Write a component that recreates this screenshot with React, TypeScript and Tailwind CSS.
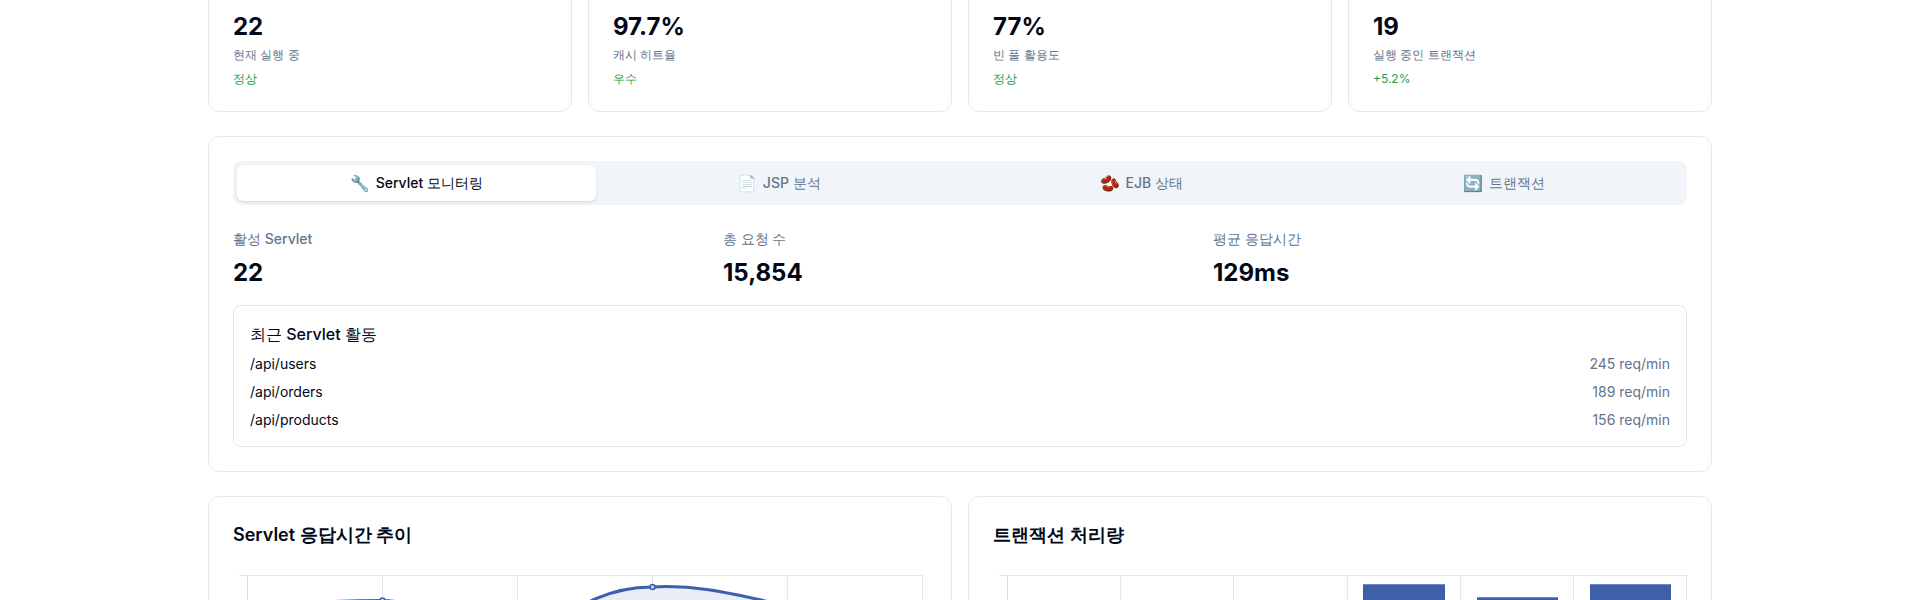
import React from "react";

const stats = [
  { value: "22", label: "현재 실행 중", trend: "정상", hint: "mr-[3px] w-[5px] bg-[#f1f5f9]" },
  { value: "97.7%", label: "캐시 히트율", trend: "우수", hint: "mr-[4px] w-[22px] bg-[#dbeafe]" },
  { value: "77%", label: "빈 풀 활용도", trend: "정상", hint: "w-0" },
  { value: "19", label: "실행 중인 트랜잭션", trend: "+5.2%", hint: "mr-[2px] w-[26px] bg-[#f1f5f9]" },
];
const tabs = [
  { icon: "🔧", label: "Servlet 모니터링", active: true },
  { icon: "📄", label: "JSP 분석" },
  { icon: "🫘", label: "EJB 상태" },
  { icon: "🔄", label: "트랜잭션" },
];
const metrics = [
  { label: "활성 Servlet", value: "22" },
  { label: "총 요청 수", value: "15,854" },
  { label: "평균 응답시간", value: "129ms" },
];
const rows = [
  { path: "/api/users", rate: "245 req/min" },
  { path: "/api/orders", rate: "189 req/min" },
  { path: "/api/products", rate: "156 req/min" },
];

const linePath =
  "M270 606C310 602 345 600.5 382 600.5C430 600.5 470 640 517 640C545 640 580 587 652 587C690 585 720 590 787 606";

function LineChart() {
  const xs = [382.5, 517.5, 652.5, 787.5, 922.5];
  return (
    <svg width="694" height="40" viewBox="233 575 694 40" className="block">
      <path d="M239 575.5H923" stroke="#e2e8f0" fill="none" />
      <path d="M247.5 575V615" stroke="#d5dbe6" fill="none" />
      {xs.map((x) => (
        <path key={x} d={`M${x} 575V615`} stroke="#e2e8f0" fill="none" />
      ))}
      <path d={`${linePath}V640H270Z`} fill="#e9edf6" />
      <path d={linePath} fill="none" stroke="#3f5fad" strokeWidth="3" />
      <circle cx="382.5" cy="600.5" r="2.5" fill="#c5cfe8" stroke="#3f5fad" strokeWidth="1.5" />
      <circle cx="652.5" cy="587" r="2.5" fill="#c5cfe8" stroke="#3f5fad" strokeWidth="1.5" />
    </svg>
  );
}

function BarChart() {
  const xs = [1120.5, 1233.5, 1347.5, 1460.5, 1573.5, 1686.5];
  return (
    <svg width="694" height="40" viewBox="993 575 694 40" className="block">
      <path d="M999 575.5H1687" stroke="#e2e8f0" fill="none" />
      <path d="M1007.5 575V615" stroke="#d5dbe6" fill="none" />
      {xs.map((x) => (
        <path key={x} d={`M${x} 575V615`} stroke="#e2e8f0" fill="none" />
      ))}
      <rect x="1363" y="584" width="82" height="40" fill="#3f5fa8" />
      <rect x="1477" y="597" width="81" height="30" fill="#3f5fa8" />
      <rect x="1590" y="584" width="81" height="40" fill="#3f5fa8" />
      <path d="M1363 584.5H1445M1477 597.5H1558M1590 584.5H1671" stroke="#6f88bf" />
    </svg>
  );
}

export default function App() {
  return (
    <div className="h-[600px] overflow-hidden bg-white font-['Inter',sans-serif] text-[#020817]">
      <div className="mx-auto mt-[-14px] flex max-w-[1536px] flex-col gap-6 px-4">
        <div className="grid grid-cols-4 gap-4">
          {stats.map((s) => (
            <div key={s.label} className="rounded-xl border border-[#e2e8f0] bg-white px-6 pb-6">
              <div className="flex h-[16px] justify-end">
                <div className={`h-[2px] ${s.hint}`} />
              </div>
              <div className="mt-2 text-2xl font-bold">{s.value}</div>
              <div className="mt-1 text-xs text-[#64748b]">{s.label}</div>
              <div className="mt-2 text-xs text-[#16a34a]">{s.trend}</div>
            </div>
          ))}
        </div>

        <div className="rounded-xl border border-[#e2e8f0] bg-white p-6">
          <div className="grid h-11 grid-cols-4 gap-1 rounded-lg bg-[#f1f5f9] p-1">
            {tabs.map((t) => (
              <div
                key={t.label}
                className={`flex items-center justify-center gap-1.5 rounded-md text-sm font-medium ${
                  t.active ? "bg-white text-[#020817] shadow-sm" : "text-[#64748b]"
                }`}
              >
                <span className="text-base">{t.icon}</span>
                <span>{t.label}</span>
              </div>
            ))}
          </div>
          <div className="mt-6 grid grid-cols-3 gap-4">
            {metrics.map((m) => (
              <div key={m.label}>
                <div className="text-sm font-medium text-[#64748b]">{m.label}</div>
                <div className="mt-2 text-2xl font-bold">{m.value}</div>
              </div>
            ))}
          </div>
          <div className="mt-4 rounded-lg border border-[#e2e8f0] p-4">
            <div className="mb-2 font-medium">최근 Servlet 활동</div>
            <div className="flex flex-col gap-2">
              {rows.map((r) => (
                <div key={r.path} className="flex justify-between text-sm">
                  <span>{r.path}</span>
                  <span className="text-[#64748b]">{r.rate}</span>
                </div>
              ))}
            </div>
          </div>
        </div>

        <div className="grid grid-cols-2 gap-4">
          <div className="rounded-xl border border-[#e2e8f0] bg-white p-6">
            <div className="mb-[26px] text-lg font-semibold">Servlet 응답시간 추이</div>
            <LineChart />
          </div>
          <div className="rounded-xl border border-[#e2e8f0] bg-white p-6">
            <div className="mb-[26px] text-lg font-semibold">트랜잭션 처리량</div>
            <BarChart />
          </div>
        </div>
      </div>
    </div>
  );
}
